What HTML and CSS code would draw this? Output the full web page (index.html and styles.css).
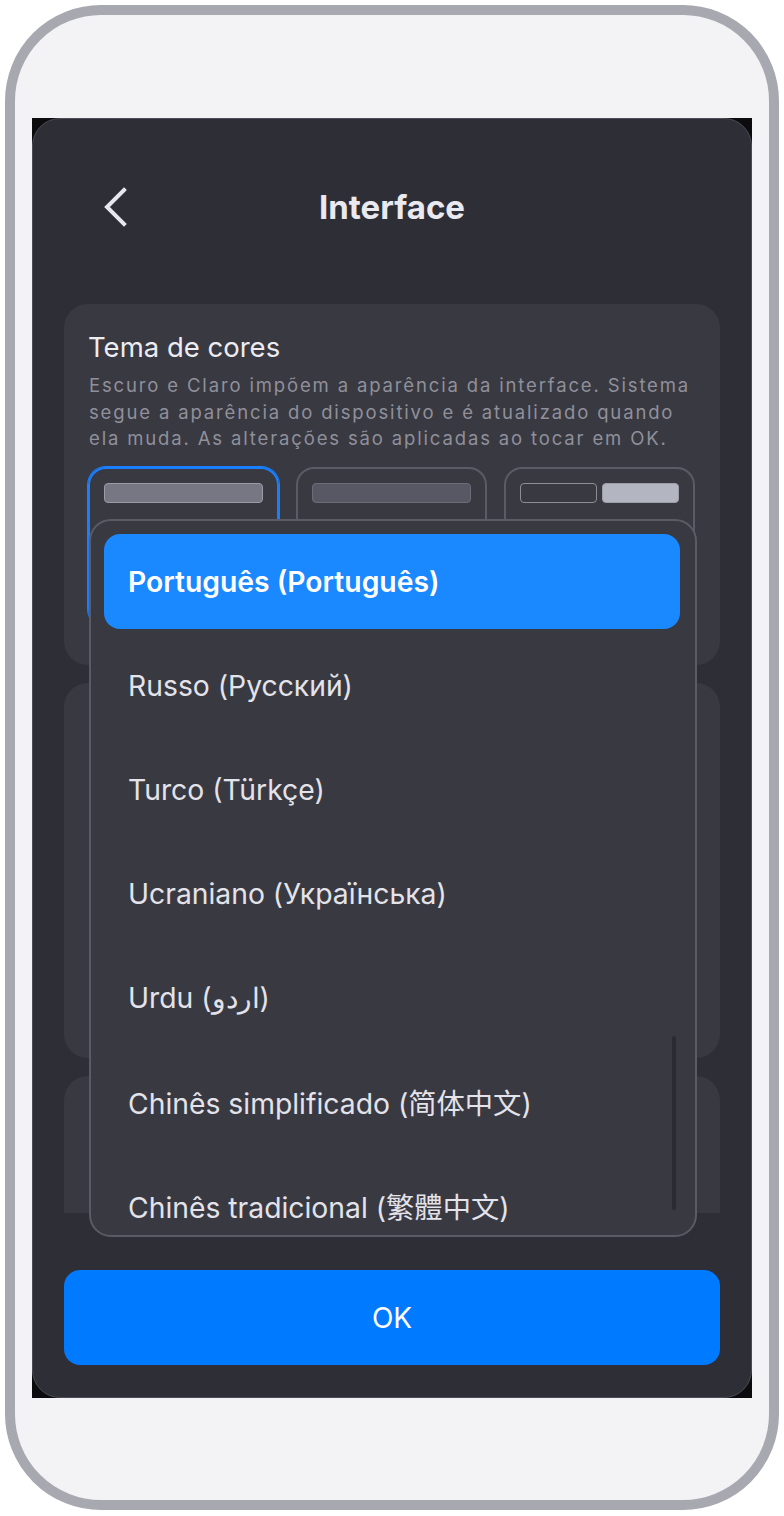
FILE: index.html
```html
<!DOCTYPE html>
<html lang="pt">
<head>
<meta charset="utf-8">
<title>Interface</title>
<link rel="stylesheet" href="styles.css">
</head>
<body>
<div class="phone">
  <div class="screen">
    <div class="panel">
      <header class="header">
        <button class="back" aria-label="Voltar">
          <svg width="26" height="40" viewBox="0 0 26 40"><polyline points="22,3 5,20 22,37" fill="none" stroke="#e6e6ec" stroke-width="4" stroke-linecap="square" stroke-linejoin="miter"/></svg>
        </button>
        <h1 class="title">Interface</h1>
        <span class="spacer"></span>
      </header>
      <div class="scroll">
        <section class="card card-theme">
          <h2 class="card-title">Tema de cores</h2>
          <p class="card-desc">Escuro e Claro impõem a aparência da interface. Sistema segue a aparência do dispositivo e é atualizado quando ela muda. As alterações são aplicadas ao tocar em OK.</p>
          <div class="themes">
            <div class="theme selected"><div class="bar bar-mid"></div></div>
            <div class="theme"><div class="bar bar-dark"></div></div>
            <div class="theme split"><div class="bar bar-outline"></div><div class="bar bar-light"></div></div>
          </div>
        </section>
        <section class="card card-second"></section>
        <section class="card card-third"></section>
      </div>
      <div class="footer">
        <button class="ok">OK</button>
      </div>
      <div class="dropdown">
        <ul class="options">
          <li class="option active">Português (Português)</li>
          <li class="option">Russo (Русский)</li>
          <li class="option">Turco (Türkçe)</li>
          <li class="option">Ucraniano (Українська)</li>
          <li class="option">Urdu (<span dir="rtl">اردو</span>)</li>
          <li class="option">Chinês simplificado (简体中文)</li>
          <li class="option tc">Chinês tradicional (繁體中文)</li>
        </ul>
        <div class="scrollbar"></div>
      </div>
    </div>
  </div>
</div>
</body>
</html>
```
FILE: styles.css
```css
* { box-sizing: border-box; }
html, body { margin: 0; padding: 0; }
body {
  background: #ffffff;
  font-family: Inter, "Noto Sans", "Noto Sans CJK SC", sans-serif;
}
.phone {
  width: 774px;
  height: 1505px;
  margin: 5px;
  border: 10px solid #a8a8b0;
  border-radius: 96px;
  background: #f3f3f6;
  padding: 103px 0 0 17px;
}
.screen {
  width: 720px;
  height: 1280px;
  background: #0c0c0f;
}
.panel {
  position: relative;
  height: 100%;
  background: #2e2e36;
  border: 1px solid #4c4c56;
  border-radius: 28px;
  display: flex;
  flex-direction: column;
  overflow: hidden;
}
.header {
  flex: 0 0 auto;
  display: grid;
  grid-template-columns: 1fr auto 1fr;
  align-items: center;
  height: 96px;
  margin: 40px 0 49px;
}
.back {
  justify-self: start;
  margin-left: 69px;
  padding: 0;
  border: 0;
  background: none;
  display: flex;
}
.title {
  margin: 0;
  font-size: 33px;
  font-weight: 700;
  color: #e9e9ef;
}
.scroll {
  flex: 0 0 909px;
  overflow: hidden;
  padding: 0 31px;
  display: flex;
  flex-direction: column;
  gap: 18px;
}
.card {
  flex: 0 0 auto;
  background: #393942;
  border-radius: 24px;
}
.card-theme {
  height: 361px;
  padding: 27px 25px 0 24px;
}
.card-second { height: 375px; }
.card-third { height: 300px; }
.card-title {
  margin: 0;
  font-size: 27.5px;
  line-height: 32px;
  font-weight: 400;
  color: #ececf1;
}
.card-desc {
  margin: 9px 0 0 1px;
  font-size: 18.5px;
  line-height: 26.5px;
  color: #90909a;
  letter-spacing: 1.85px;
}
.themes {
  margin-top: 15px;
  display: grid;
  grid-template-columns: repeat(3, 1fr);
  gap: 17px;
}
.theme {
  height: 160px;
  border: 2px solid #5b5b65;
  border-radius: 18px;
  padding: 14px 14px;
  display: flex;
  gap: 5px;
  align-items: flex-start;
}
.theme.selected {
  border-color: #1a7fff;
  box-shadow: 0 0 0 1px #1a7fff;
}
.bar {
  flex: 1;
  height: 20px;
  border-radius: 4px;
  border: 1.5px solid;
}
.bar-mid { background: #777784; border-color: #9b9ba5; }
.bar-dark { background: #585864; border-color: #6c6c77; }
.bar-outline { background: #393942; border-color: #8d8d96; }
.bar-light { background: #b3b5c0; border-color: #9c9ea8; }
.footer {
  flex: 0 0 auto;
  padding: 57px 31px 32px;
}
.ok {
  width: 100%;
  height: 95px;
  border: 0;
  border-radius: 16px;
  background: #007aff;
  color: #ffffff;
  font-family: inherit;
  font-size: 28px;
  font-weight: 400;
}
.dropdown {
  position: absolute;
  left: 56px;
  top: 400px;
  width: 608px;
  height: 718px;
  background: #393942;
  border: 2px solid #5b5b65;
  border-radius: 22px;
  overflow: hidden;
  padding: 13px 15px 0 13px;
}
.options {
  list-style: none;
  margin: 0;
  padding: 0;
  display: flex;
  flex-direction: column;
  gap: 9px;
}
.option {
  height: 95px;
  flex: 0 0 95px;
  display: flex;
  align-items: center;
  padding-left: 24px;
  font-size: 28.3px;
  color: #e3e3e9;
  border-radius: 16px;
  font-family: Inter, "Noto Sans", "Noto Sans CJK SC", sans-serif;
}
.option.tc { font-family: Inter, "Noto Sans", "Noto Sans CJK TC", sans-serif; }
.option.active {
  background: #1a88ff;
  color: #ffffff;
  font-weight: 600;
}
.scrollbar {
  position: absolute;
  left: 581px;
  top: 515px;
  width: 4px;
  height: 174px;
  border-radius: 2px;
  background: #2b2b33;
}
```
